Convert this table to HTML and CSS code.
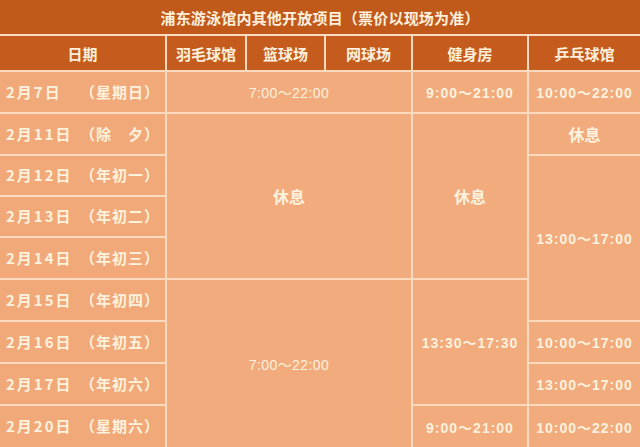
FILE: index.html
```html
<!DOCTYPE html>
<html lang="zh">
<head>
<meta charset="utf-8">
<title>浦东游泳馆内其他开放项目</title>
<link rel="stylesheet" href="styles.css">
</head>
<body>
<table class="sched">
  <colgroup>
    <col class="c-date"><col class="c-bad"><col class="c-bas"><col class="c-ten"><col class="c-gym"><col class="c-pp">
  </colgroup>
  <tr class="r-title"><th colspan="6" class="title">浦东游泳馆内其他开放项目（票价以现场为准）</th></tr>
  <tr class="r-head">
    <th>日期</th><th>羽毛球馆</th><th>篮球场</th><th>网球场</th><th>健身房</th><th>乒乓球馆</th>
  </tr>
  <tr class="r-a">
    <td class="date"><span class="d">2月7日</span><span class="w">（星期日）</span></td>
    <td colspan="3" class="t thin">7:00～22:00</td>
    <td class="t">9:00～21:00</td>
    <td class="t">10:00～22:00</td>
  </tr>
  <tr class="r-a">
    <td class="date"><span class="d">2月11日</span><span class="w">（除　夕）</span></td>
    <td colspan="3" rowspan="4" class="rest">休息</td>
    <td rowspan="4" class="rest">休息</td>
    <td class="rest">休息</td>
  </tr>
  <tr class="r-b">
    <td class="date"><span class="d">2月12日</span><span class="w">（年初一）</span></td>
    <td rowspan="4" class="t">13:00～17:00</td>
  </tr>
  <tr class="r-b">
    <td class="date"><span class="d">2月13日</span><span class="w">（年初二）</span></td>
  </tr>
  <tr class="r-a">
    <td class="date"><span class="d">2月14日</span><span class="w">（年初三）</span></td>
  </tr>
  <tr class="r-a">
    <td class="date"><span class="d">2月15日</span><span class="w">（年初四）</span></td>
    <td colspan="3" rowspan="4" class="t thin">7:00～22:00</td>
    <td rowspan="3" class="t">13:30～17:30</td>
  </tr>
  <tr class="r-a">
    <td class="date"><span class="d">2月16日</span><span class="w">（年初五）</span></td>
    <td class="t">10:00～17:00</td>
  </tr>
  <tr class="r-a">
    <td class="date"><span class="d">2月17日</span><span class="w">（年初六）</span></td>
    <td class="t">13:00～17:00</td>
  </tr>
  <tr class="r-a">
    <td class="date"><span class="d">2月20日</span><span class="w">（星期六）</span></td>
    <td class="t">9:00～21:00</td>
    <td class="t">10:00～22:00</td>
  </tr>
</table>
</body>
</html>
```
FILE: styles.css
```css
html, body {
  margin: 0;
  padding: 0;
  background: #f2ab7d;
}
body {
  width: 640px;
  height: 447px;
  overflow: hidden;
  font-family: "Noto Sans CJK SC", "Noto Sans", sans-serif;
  color: #fdf2de;
}
.sched {
  width: 640px;
  border-collapse: collapse;
  table-layout: fixed;
  border-style: hidden;
}
.c-date { width: 166px; }
.c-bad { width: 80px; }
.c-bas { width: 79px; }
.c-ten { width: 87px; }
.c-gym { width: 116px; }
.c-pp { width: 112px; }
.sched th, .sched td {
  border: 2px solid #fbdac0;
  padding: 0;
  text-align: center;
  vertical-align: middle;
  overflow: hidden;
  white-space: nowrap;
}
.r-title { height: 35px; }
.r-head { height: 36px; }
.r-a { height: 42px; }
.r-b { height: 41px; }
.title {
  background: #c1591b;
  font-size: 15px;
  font-weight: 700;
  letter-spacing: 0.2px;
  color: #fdf0dc;
}
.r-head th {
  background: #c55c1e;
  font-size: 15px;
  font-weight: 700;
  color: #fdf0dc;
}
.sched td {
  background: #f2ab7d;
}
.sched td.date {
  text-align: left;
  padding-left: 6px;
  padding-bottom: 2px;
  background: #f1a979;
  font-weight: 700;
  font-size: 15px;
}
.d {
  display: inline-block;
  width: 74px;
  letter-spacing: 2px;
}
.w {
  font-size: 15px;
  letter-spacing: 1px;
}
.t {
  font-family: "Liberation Sans", "Noto Sans CJK SC", sans-serif;
  font-size: 14px;
  font-weight: 700;
  letter-spacing: 1px;
  padding-bottom: 2px;
}
.t.thin {
  font-weight: 400;
  letter-spacing: 0.4px;
}
.rest {
  font-size: 16px;
  font-weight: 700;
}
```
